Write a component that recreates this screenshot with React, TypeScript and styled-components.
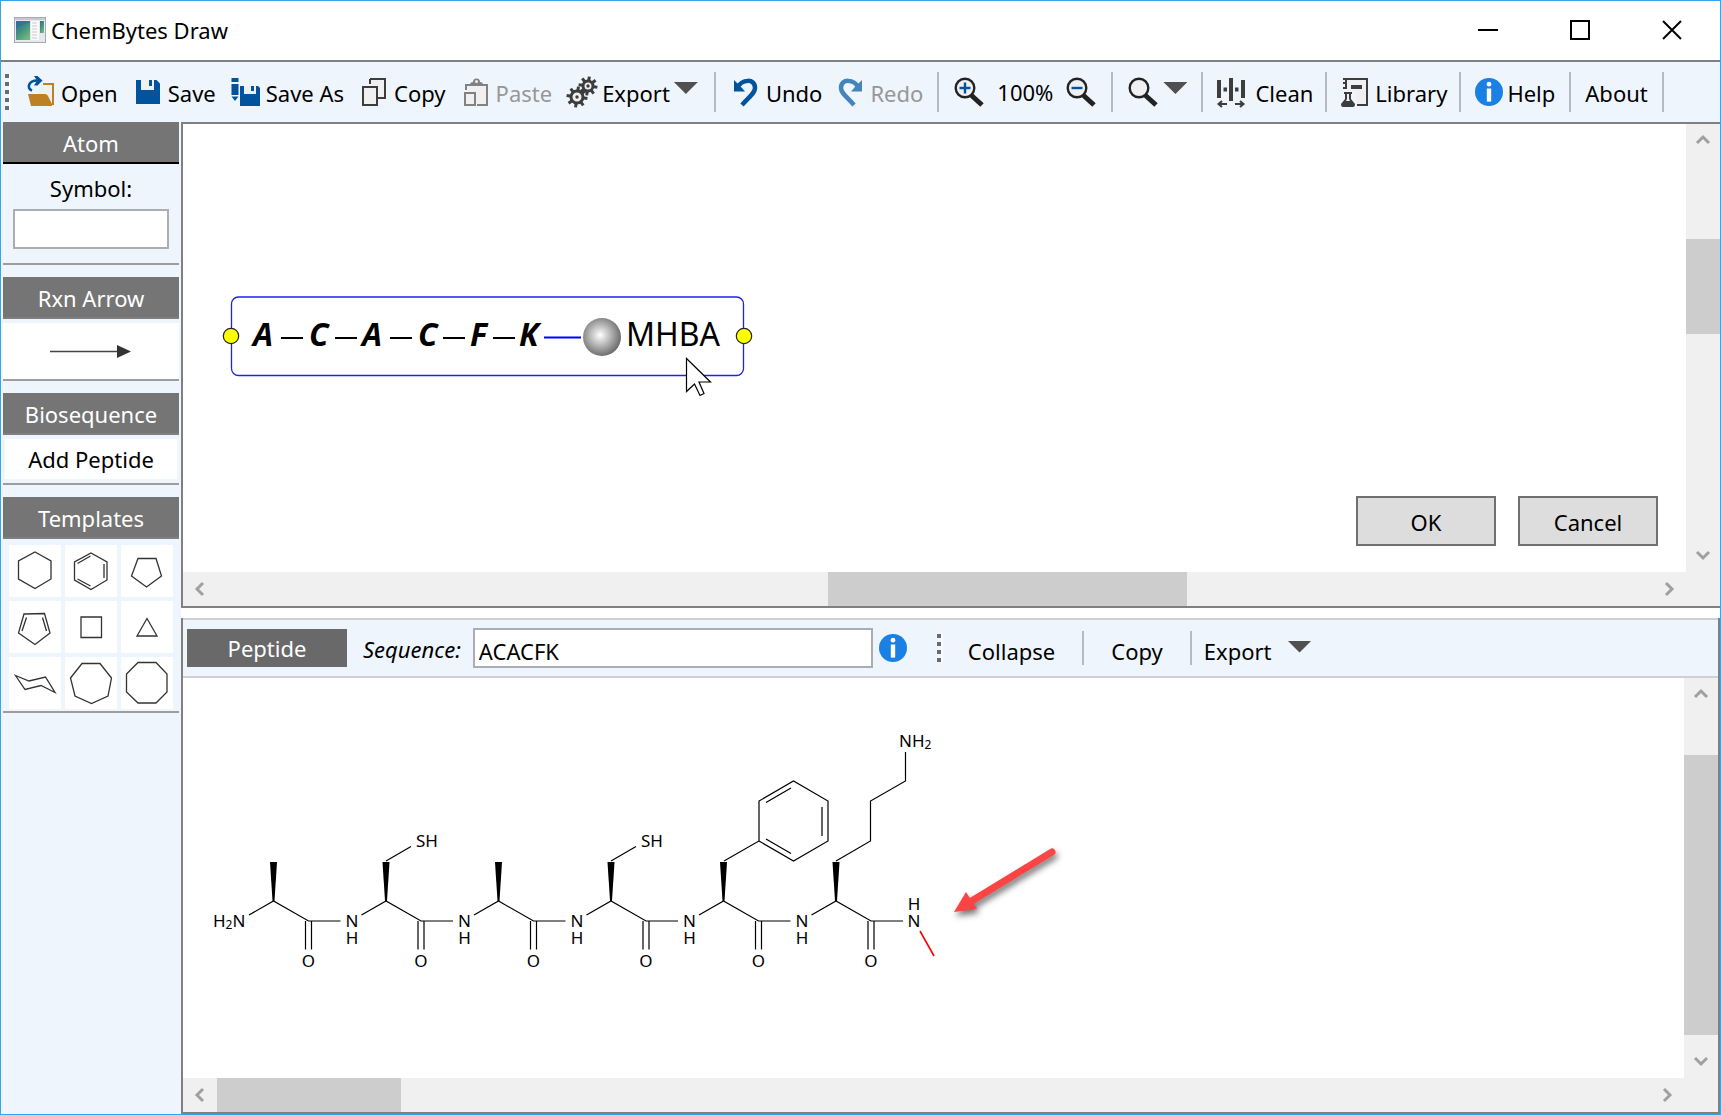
import React from "react";
import styled, { createGlobalStyle, css } from "styled-components";

const ink = "#3d3d3d";
const blue = "#00539c";
const paper = "#f0eff1";
const panel = "#eef5fd";
const line = "#808080";
const bright = "#1b80e4";

const GlobalStyle = createGlobalStyle`
  *, *::before, *::after { box-sizing: border-box; }
  body { margin: 0; background: #fff; }
  body, button, input {
    font-family: "Segoe UI", "Noto Sans", "Open Sans", sans-serif;
    font-size: 22px;
    line-height: 30px;
    color: #000;
  }
  button { border: 0; padding: 0; background: none; cursor: pointer; }
  svg { display: block; flex: none; }
`;

const Window = styled.div`
  display: flex;
  flex-direction: column;
  height: 100vh;
  min-height: 760px;
  border: 1px solid #36a6ea;
  background: ${panel};
`;

/* Title bar */
const TitleBar = styled.header`
  display: flex;
  align-items: center;
  flex: none;
  height: 61px;
  padding: 0 18px 2px 13px;
  background: #fff;
  border-bottom: 2px solid ${line};
`;
const Title = styled.h1`
  flex: 1;
  margin: 0;
  padding-left: 5px;
  font-size: 22px;
  font-weight: 400;
  line-height: 30px;
`;
const Captions = styled.div`
  display: flex;
  gap: 32px;
`;
const CaptionButton = styled.button`
  display: grid;
  place-items: center;
  width: 60px;
  height: 44px;
`;

/* Toolbar */
const Toolbar = styled.nav`
  display: flex;
  align-items: center;
  flex: none;
  height: 60px;
  padding-left: 4px;
`;
const ToolGroup = styled.div`
  display: flex;
  align-items: center;
  gap: 14px;
  padding: 0 16px;
`;
const TightGroup = styled(ToolGroup)`
  gap: 12px;
  padding: 0 14px;
`;
const SlimGroup = styled(ToolGroup)`
  padding: 0 12px;
`;
const ToolButton = styled.button<{ $roomy?: boolean }>`
  display: flex;
  align-items: center;
  gap: ${(p) => (p.$roomy ? 8 : 4)}px;
  height: 40px;
  white-space: nowrap;
  &:disabled { color: #979797; cursor: default; }
`;
const Label = styled.span`
  padding-top: 1px;
`;
const Separator = styled.span<{ $h?: number }>`
  flex: none;
  width: 2px;
  height: ${(p) => p.$h ?? 40}px;
  background: #b3bac3;
`;
const Grip = styled.span<{ $h: number }>`
  flex: none;
  width: 4px;
  height: ${(p) => p.$h}px;
  background: repeating-linear-gradient(#6b6b6b 0 4px, transparent 4px 8px);
  box-shadow: 2px 0 0 #f8fbff;
`;
const Triangle = styled.span`
  flex: none;
  width: 24px;
  height: 12px;
  margin-bottom: 8px;
  background: #505050;
  clip-path: polygon(0 0, 100% 0, 50% 100%);
`;

/* Side bar */
const Body = styled.div`
  display: flex;
  flex: 1;
  min-height: 0;
`;
const Sidebar = styled.aside`
  flex: none;
  width: 180px;
  padding: 0 2px;
`;
const Section = styled.section`
  margin-bottom: 12px;
  border-bottom: 2px solid #9d9d9d;
`;
const SectionTitle = styled.h2<{ $dark?: boolean }>`
  margin: 0;
  padding: 6px 0 4px;
  height: 42px;
  border-bottom: 2px solid ${(p) => (p.$dark ? "#000" : "#7f7f7f")};
  background: #757575;
  color: #fff;
  font-size: 22px;
  font-weight: 400;
  line-height: 30px;
  text-align: center;
`;
const SymbolForm = styled.div`
  display: flex;
  flex-direction: column;
  gap: 6px;
  padding: 9px 10px 14px;
  text-align: center;
`;
const field = css`
  min-width: 0;
  height: 40px;
  border: 2px solid #abadb3;
  border-radius: 0;
  background: #fff;
  outline: none;
`;
const SymbolInput = styled.input`
  ${field}
  width: 100%;
`;
const ArrowButton = styled.button`
  display: grid;
  place-items: center;
  width: 100%;
  height: 56px;
  margin-top: 4px;
  background: #fff;
`;
const AddButton = styled.button`
  display: block;
  width: 172px;
  height: 40px;
  margin: 4px 2px;
  background: #fff;
`;
const TemplateGrid = styled.div`
  display: grid;
  grid-template-columns: repeat(3, 52px);
  gap: 4px;
  justify-content: center;
  padding: 6px 0 2px;
`;
const TemplateButton = styled.button`
  height: 52px;
  background: #fff;
`;

/* Panes */
const Main = styled.main`
  display: flex;
  flex: 1;
  flex-direction: column;
  gap: 10px;
  min-width: 0;
  background: #fff;
`;
const SketchPane = styled.section`
  display: flex;
  flex: 482 1 0;
  flex-direction: column;
  min-height: 0;
  border: solid ${line};
  border-width: 2px 0 2px 2px;
`;
const PeptidePane = styled.section`
  display: flex;
  flex: 494 1 0;
  flex-direction: column;
  min-height: 0;
  border: solid ${line};
  border-width: 0 2px 2px;
`;
const ScrollArea = styled.div`
  display: grid;
  flex: 1;
  grid-template: minmax(0, 1fr) 34px / minmax(0, 1fr) 34px;
  min-height: 0;
  background: #f0f0f0;
`;
const Canvas = styled.div`
  display: flex;
  align-items: flex-start;
  justify-content: space-between;
  overflow: hidden;
  background: #fff;
`;
const DialogButtons = styled.div`
  display: flex;
  align-self: flex-end;
  gap: 22px;
  padding: 0 28px 26px 0;
`;
const DialogButton = styled.button`
  width: 140px;
  height: 50px;
  border: 2px solid #707070;
  background: #ddd;
  padding-top: 2px;
`;
const Bar = styled.div<{ $vertical?: boolean }>`
  display: flex;
  flex-direction: ${(p) => (p.$vertical ? "column" : "row")};
`;
const BarButton = styled.button`
  display: grid;
  place-items: center;
  flex: none;
  width: 34px;
  height: 34px;
`;
const BarPart = styled.span<{ $grow: number; $thumb?: boolean }>`
  flex: ${(p) => p.$grow} 1 0;
  background: ${(p) => (p.$thumb ? "#cdcdcd" : "transparent")};
`;

const PeptideBar = styled.div`
  display: flex;
  align-items: center;
  flex: none;
  height: 60px;
  padding-left: 4px;
  border: solid #d0d0d0;
  border-width: 2px 0;
  background: ${panel};
`;
const PeptideTab = styled.button`
  width: 160px;
  height: 38px;
  background: #696969;
  color: #fff;
`;
const SequenceLabel = styled.label`
  padding: 2px 12px 0 16px;
  font-style: italic;
`;
const SequenceInput = styled.input`
  ${field}
  width: 400px;
  padding: 5px 4px 0;
`;
const InfoButton = styled.button`
  margin: 0 30px 0 6px;
`;
const BarText = styled.button<{ $wide?: boolean }>`
  display: flex;
  align-items: center;
  gap: 16px;
  padding: 5px ${(p) => (p.$wide ? 27 : 12)}px 0;
`;

/* Icons */
const Icon = ({ children, size = 32 }: { children: React.ReactNode; size?: number }) => (
  <svg width={size} height={size} viewBox="0 0 32 32" aria-hidden="true">{children}</svg>
);

const AppIcon = () => (
  <svg width="32" height="26" viewBox="0 0 32 26" aria-hidden="true">
    <defs>
      <linearGradient id="app" x1="0" y1="0" x2="0.7" y2="1">
        <stop offset="0" stopColor="#356d92" /><stop offset="0.5" stopColor="#418f80" /><stop offset="1" stopColor="#72b87c" />
      </linearGradient>
    </defs>
    <rect x="0.5" y="0.5" width="31" height="25" fill="#e6e8ec" stroke="#a6abb5" />
    <rect x="1" y="1" width="30" height="2" fill="#c3c8d1" />
    <rect x="2" y="4" width="14" height="19" fill="url(#app)" />
    <path d="M2 12Q9 7 16 6V4H2Z" fill="#28649a" opacity="0.35" />
    <rect x="17" y="4" width="8" height="19" fill="#fafafa" />
    <path d="M18 6h5M18 9h5M18 12h5M18 15h5M18 18h5M18 21h5" stroke="#c8cbd0" />
    <rect x="26" y="4" width="4" height="12" fill="url(#app)" />
  </svg>
);
const OpenIcon = () => (
  <Icon>
    <path d="M15 8h14v22H11z" fill={paper} />
    <path d="M18 8h10v21" fill="none" stroke="#bd8022" strokeWidth="2" />
    <path d="M3 18h17q2 0 3 2l4 8v2H6z" fill="#bd8022" />
    <path d="M7 14.500C1 12 4 4.500 12 4.500" fill="none" stroke={blue} strokeWidth="2.600" />
    <path d="M9 0h3.500l5 4.500-5 5H9L12 4.500z" fill={blue} />
  </Icon>
);
const SaveIcon = () => (
  <Icon>
    <path d="M4 4h20.500l3.500 3.500V28H4z" fill={blue} />
    <path d="M9 4h13v10H9z" fill={paper} /><path d="M17 4h3v6h-3z" fill={blue} />
  </Icon>
);
const SaveAsIcon = () => (
  <Icon>
    <path d="M10 10h18l2 2v18H10z" fill={blue} />
    <path d="M14 10h12v8H14z" fill={paper} /><path d="M21 10h3v5h-3z" fill={blue} />
    <path d="M1.500 2h7v4h-7zM1.500 8h7v11h-7zM1.500 20.500h7L5 25z" fill={blue} />
  </Icon>
);
const CopyIcon = () => (
  <Icon>
    <path d="M12 3h15v19H19M12 8V3" fill={paper} stroke={ink} strokeWidth="2" />
    <path d="M5 11h14v18H5z" fill={paper} stroke={ink} strokeWidth="2" />
  </Icon>
);
const PasteIcon = () => (
  <Icon>
    <path d="M6 14V9h21v20H17" fill={paper} stroke="#818181" strokeWidth="2" />
    <path d="M10 9q0-3 3-3a3.500 3.500 0 0 1 7 0q3 0 3 3z" fill="#818181" />
    <circle cx="16.500" cy="5.500" r="1.500" fill={paper} />
    <path d="M5 17h10v12H5z" fill={paper} stroke="#818181" strokeWidth="2" />
  </Icon>
);
const Gear = ({ x, y, r }: { x: number; y: number; r: number }) => (
  <g transform={`translate(${x} ${y})`}>
    {[0, 45, 90, 135, 180, 225, 270, 315].map((a) => (
      <rect key={a} x="-1.500" y={-r} width="3" height="5" fill={ink} transform={`rotate(${a + 8})`} />
    ))}
    <circle r={r - 4.5} fill={paper} stroke={ink} strokeWidth="3" />
    <circle r="1.700" fill={ink} />
  </g>
);
const GearsIcon = () => (
  <Icon><Gear x={22} y={10} r={9.5} /><Gear x={11} y={21} r={10.5} /></Icon>
);
const UndoIcon = ({ flip = false }: { flip?: boolean }) => (
  <Icon>
    <g transform={flip ? "translate(32 0) scale(-1 1)" : undefined}>
      <path d="M4 4v11.500h11l-3.500-4z" fill={flip ? "#4484bd" : blue} />
      <path d="M7 12C12 3 25 2 25 12c0 5-5 8-13 17" fill="none" stroke={flip ? "#4484bd" : blue} strokeWidth="4.500" />
    </g>
  </Icon>
);
const MagnifierIcon = ({ sign }: { sign?: "+" | "-" }) => (
  <Icon>
    <path d="M18 19l11 10" stroke="#222" strokeWidth="5" />
    <circle cx="12" cy="12" r="9.300" fill={paper} stroke="#222" strokeWidth="2.400" />
    {sign && <path d={sign === "+" ? "M6.500 12h11M12 6.500v11" : "M6.500 12h11"} stroke={blue} strokeWidth="2.400" />}
  </Icon>
);
const CleanIcon = () => (
  <Icon>
    <path d="M4 4v18M16 2v23M28 4v18" stroke={ink} strokeWidth="4" />
    <path d="M8.500 11.500h3.500v4h-3.500zM20 11.500h3.500v4h-3.500z" fill={ink} />
    <path d="M3 28h9M20 28h9" stroke={ink} strokeWidth="2" />
    <path d="M7 25l-3.500 3 3.500 3M25 25l3.500 3-3.500 3" fill="none" stroke={ink} strokeWidth="2" />
  </Icon>
);
const LibraryIcon = () => (
  <Icon>
    <path d="M6 3h22v26H17V15H6z" fill={paper} />
    <path d="M4 3h24v26H18M7 3v9M4 7h4M4 12h4" fill="none" stroke={ink} strokeWidth="2" />
    <path d="M12 9h11v4H12z" fill={ink} />
    <path d="M5 16h8v2h-1v5l4 5q0 3-2 3H4q-2 0-2-3l4-5v-5H5z" fill={ink} />
    <path d="M8 18h2v5l1 2H7l1-2z" fill={paper} />
  </Icon>
);
const InfoIcon = ({ size }: { size?: number }) => (
  <Icon size={size}>
    <circle cx="16" cy="16" r="16" fill={bright} />
    <circle cx="16" cy="7" r="2.700" fill="#fff" /><path d="M13.500 12h5v15h-5z" fill="#fff" />
  </Icon>
);

const chevrons = { up: "M2 10l6-6 6 6", down: "M2 5l6 6 6-6", left: "M11 2L5 8l6 6", right: "M5 2l6 6-6 6" };
const Chevron = ({ dir }: { dir: keyof typeof chevrons }) => (
  <svg width="16" height="16" viewBox="0 0 16 16" aria-hidden="true">
    <path d={chevrons[dir]} fill="none" stroke="#a0a0a0" strokeWidth="3" />
  </svg>
);

type BarProps = { vertical?: boolean; parts: [number, number, number] };
const ScrollBar = ({ vertical, parts }: BarProps) => (
  <Bar $vertical={vertical}>
    <BarButton aria-label={vertical ? "Scroll up" : "Scroll left"}><Chevron dir={vertical ? "up" : "left"} /></BarButton>
    <BarPart $grow={parts[0]} />
    <BarPart $grow={parts[1]} $thumb />
    <BarPart $grow={parts[2]} />
    <BarButton aria-label={vertical ? "Scroll down" : "Scroll right"}><Chevron dir={vertical ? "down" : "right"} /></BarButton>
  </Bar>
);

/* Ring templates, each drawn in a 52 x 52 cell */
const templates = [
  { name: "Cyclohexane", d: "M26 7l16 9v18l-16 9.500L9.500 34V16z" },
  { name: "Benzene", d: "M26 8l16 9v18l-16 9.500L9.500 35V17zM12.500 18.500L25.500 11M39 19v14M12.500 34L25.500 41" },
  { name: "Cyclopentane", d: "M17 13.500h18L40.500 31l-15 11L10.500 31z" },
  { name: "Cyclopentadiene", d: "M15 13l20.500-.500L41 32 26 43.500 9.500 32zM17.500 16.500L13 30M33.500 16.500L37.500 30" },
  { name: "Cyclobutane", d: "M16 16h20.500v20.500H16z" },
  { name: "Cyclopropane", d: "M26 17.500l10 17.500H16z" },
  { name: "Chair", d: "M6.500 18.500L20 24l16.500-4L46 35.500 32 28.500 16 32.500z" },
  { name: "Cycloheptane", d: "M17 6.500h18L46.500 21 43 39 26.500 46.500 10 39 5.500 21z" },
  { name: "Cyclooctane", d: "M17 5.500h18L46 17v18L35 46H17L5.500 35V17z" },
];

const residues = [
  { letter: "A", x: 70 }, { letter: "C", x: 126 }, { letter: "A", x: 179 },
  { letter: "C", x: 235 }, { letter: "F", x: 287 }, { letter: "K", x: 336 },
];
const links = [98, 152, 207, 260, 310];

const SketchText = styled.text<{ $bold?: boolean }>`
  font-size: 32px;
  font-weight: ${(p) => (p.$bold ? 700 : 400)};
  font-style: ${(p) => (p.$bold ? "italic" : "normal")};
`;
const AtomText = styled.text`
  font-size: 17px;
`;

const SequenceSketch = () => (
  <svg width="600" height="300" viewBox="0 0 600 300" role="img" aria-label="Peptide sequence A-C-A-C-F-K-MHBA">
    <defs>
      <radialGradient id="bead" cx="0.45" cy="0.45" r="0.55">
        <stop offset="0" stopColor="#fff" /><stop offset="1" stopColor="#6e6e6e" />
      </radialGradient>
    </defs>
    <rect x="48.500" y="173" width="512" height="78.500" rx="7" fill="none" stroke="#2020ee" strokeWidth="1.300" />
    {residues.map((r) => <SketchText key={r.x} $bold x={r.x} y="222">{r.letter}</SketchText>)}
    {links.map((x) => <path key={x} d={`M${x} 214h22`} stroke="#000" strokeWidth="2" />)}
    <path d="M361 213.500h37" stroke="#00f" strokeWidth="2.200" />
    <circle cx="419" cy="213" r="19" fill="url(#bead)" />
    <SketchText x="443" y="222">MHBA</SketchText>
    {[48, 561].map((x) => <circle key={x} cx={x} cy="212" r="7.700" fill="#ff0" stroke="#222" strokeWidth="1.200" />)}
    <path d="M503.500 234.500v33l8-7.500 5.500 11.500 4-2-5-11.500h11.500z" fill="#fff" stroke="#000" strokeWidth="1.200" />
  </svg>
);

/* One residue of the backbone: wedge, alpha carbon, carbonyl and the bond to the next nitrogen */
const Residue = ({ x }: { x: number }) => (
  <g>
    <path d={`M${x - 24.5} 237L${x} 223l35 20h32M${x + 32} 243v28.500M${x + 38} 243v28.500`} fill="none" stroke="#000" strokeWidth="1.200" />
    <path d={`M${x - 3.5} 184h7L${x + 1} 223h-2z`} fill="#000" />
    <AtomText x={x + 35} y="289" textAnchor="middle">O</AtomText>
  </g>
);
const alphas = [90.5, 203, 315.5, 428, 540.5, 653];

const StructureSketch = () => (
  <svg width="900" height="340" viewBox="0 0 900 340" role="img" aria-label="Peptide structure">
    {alphas.map((x) => <Residue key={x} x={x} />)}
    <AtomText x="30" y="249">H<tspan fontSize="12" dy="2">2</tspan><tspan dy="-2">N</tspan></AtomText>
    {alphas.slice(1).map((x) => (
      <AtomText key={x} textAnchor="middle" y="249">
        <tspan x={x - 34}>N</tspan>
        <tspan x={x - 34} dy="17">H</tspan>
      </AtomText>
    ))}
    {[203, 428].map((x) => (
      <g key={x}>
        <path d={`M${x} 183l25-14.500`} stroke="#000" strokeWidth="1.200" />
        <AtomText x={x + 30} y="169">SH</AtomText>
      </g>
    ))}
    <path
      d="M541 183l35-20v-40l34.500-20 34.500 20v40l-34.500 20-34.500-20M583 124.500l25-14.500M639 129v29M583 161l25 14.500M653 183l34.500-20v-40l35-20V74"
      fill="none" stroke="#000" strokeWidth="1.200"
    />
    <AtomText x="716" y="69">NH<tspan fontSize="12" dy="2">2</tspan></AtomText>
    <AtomText textAnchor="middle" y="232">
      <tspan x="731">H</tspan>
      <tspan x="731" dy="17">N</tspan>
    </AtomText>
    <path d="M737 253l14 25" stroke="#f00" strokeWidth="1.600" />
    <g fill="#fc4444" style={{ filter: "drop-shadow(2px 4px 3px rgba(0,0,0,.55))" }}>
      <path d="M771 234l12-20 11 17z" />
      <path d="M787 224L869 174" stroke="#fc4444" strokeWidth="7" strokeLinecap="round" />
    </g>
  </svg>
);

export default function App() {
  return (
    <Window>
      <GlobalStyle />
      <TitleBar>
        <AppIcon />
        <Title>ChemBytes Draw</Title>
        <Captions>
          <CaptionButton aria-label="Minimize">
            <svg width="20" height="20"><path d="M0 10h20" stroke="#000" strokeWidth="2" /></svg>
          </CaptionButton>
          <CaptionButton aria-label="Maximize">
            <svg width="20" height="20"><path d="M1 1h18v18H1z" fill="none" stroke="#000" strokeWidth="2" /></svg>
          </CaptionButton>
          <CaptionButton aria-label="Close">
            <svg width="20" height="20"><path d="M1 1l18 18M19 1L1 19" stroke="#000" strokeWidth="2" /></svg>
          </CaptionButton>
        </Captions>
      </TitleBar>

      <Toolbar>
        <Grip $h={36} />
        <ToolGroup>
          <ToolButton><OpenIcon /><Label>Open</Label></ToolButton>
          <ToolButton><SaveIcon /><Label>Save</Label></ToolButton>
          <ToolButton><SaveAsIcon /><Label>Save As</Label></ToolButton>
          <ToolButton><CopyIcon /><Label>Copy</Label></ToolButton>
          <ToolButton disabled><PasteIcon /><Label>Paste</Label></ToolButton>
          <ToolButton><GearsIcon /><Label>Export</Label><Triangle /></ToolButton>
        </ToolGroup>
        <Separator />
        <TightGroup>
          <ToolButton><UndoIcon /><Label>Undo</Label></ToolButton>
          <ToolButton disabled><UndoIcon flip /><Label>Redo</Label></ToolButton>
        </TightGroup>
        <Separator />
        <TightGroup>
          <ToolButton aria-label="Zoom in"><MagnifierIcon sign="+" /></ToolButton>
          <span>100%</span>
          <ToolButton aria-label="Zoom out"><MagnifierIcon sign="-" /></ToolButton>
        </TightGroup>
        <Separator />
        <TightGroup>
          <ToolButton aria-label="Zoom options"><MagnifierIcon /><Triangle /></ToolButton>
        </TightGroup>
        <Separator />
        <SlimGroup>
          <ToolButton $roomy><CleanIcon /><Label>Clean</Label></ToolButton>
        </SlimGroup>
        <Separator />
        <SlimGroup>
          <ToolButton><LibraryIcon /><Label>Library</Label></ToolButton>
        </SlimGroup>
        <Separator />
        <TightGroup>
          <ToolButton><InfoIcon size={28} /><Label>Help</Label></ToolButton>
        </TightGroup>
        <Separator />
        <TightGroup>
          <ToolButton><Label>About</Label></ToolButton>
        </TightGroup>
        <Separator />
      </Toolbar>

      <Body>
        <Sidebar>
          <Section>
            <SectionTitle $dark>Atom</SectionTitle>
            <SymbolForm>
              <label htmlFor="symbol">Symbol:</label>
              <SymbolInput id="symbol" type="text" />
            </SymbolForm>
          </Section>
          <Section>
            <SectionTitle>Rxn Arrow</SectionTitle>
            <ArrowButton aria-label="Reaction arrow">
              <svg width="82" height="14" viewBox="0 0 82 14">
                <path d="M0 7.500h68" stroke="#444" strokeWidth="1.500" /><path d="M67 1l14 6.500-14 6.500z" fill="#333" />
              </svg>
            </ArrowButton>
          </Section>
          <Section>
            <SectionTitle>Biosequence</SectionTitle>
            <AddButton>Add Peptide</AddButton>
          </Section>
          <Section>
            <SectionTitle>Templates</SectionTitle>
            <TemplateGrid>
              {templates.map((t) => (
                <TemplateButton key={t.name} aria-label={t.name}>
                  <svg width="52" height="52" viewBox="0 0 52 52">
                    <path d={t.d} fill="none" stroke="#333" strokeWidth="1.300" />
                  </svg>
                </TemplateButton>
              ))}
            </TemplateGrid>
          </Section>
        </Sidebar>

        <Main>
          <SketchPane>
            <ScrollArea>
              <Canvas>
                <SequenceSketch />
                <DialogButtons>
                  <DialogButton>OK</DialogButton>
                  <DialogButton>Cancel</DialogButton>
                </DialogButtons>
              </Canvas>
              <ScrollBar vertical parts={[81, 95, 204]} />
              <ScrollBar parts={[611, 359, 465]} />
            </ScrollArea>
          </SketchPane>

          <PeptidePane>
            <PeptideBar>
              <PeptideTab>Peptide</PeptideTab>
              <SequenceLabel htmlFor="sequence">Sequence:</SequenceLabel>
              <SequenceInput id="sequence" type="text" defaultValue="ACACFK" />
              <InfoButton aria-label="Sequence help"><InfoIcon size={28} /></InfoButton>
              <Grip $h={28} />
              <BarText $wide>Collapse</BarText>
              <Separator $h={34} />
              <BarText $wide>Copy</BarText>
              <Separator $h={34} />
              <BarText>Export<Triangle /></BarText>
            </PeptideBar>
            <ScrollArea>
              <Canvas><StructureSketch /></Canvas>
              <ScrollBar vertical parts={[43, 280, 9]} />
              <ScrollBar parts={[0, 184, 1249]} />
            </ScrollArea>
          </PeptidePane>
        </Main>
      </Body>
    </Window>
  );
}
